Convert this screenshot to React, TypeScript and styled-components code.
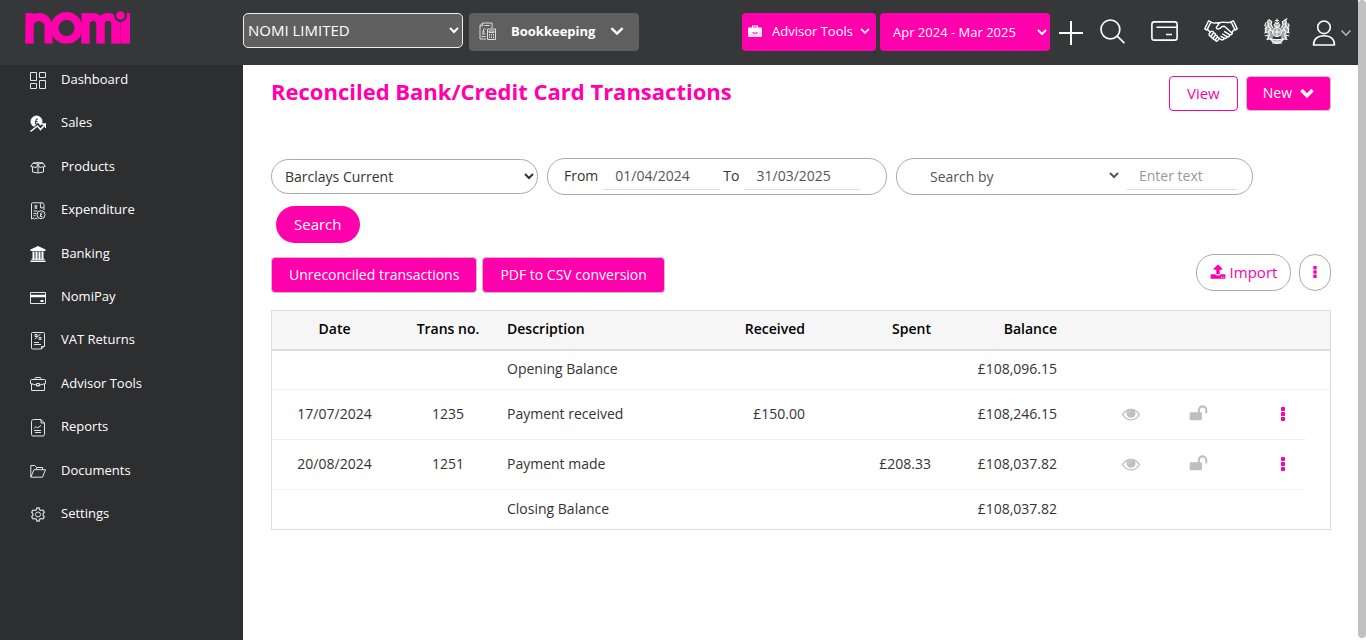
import React from "react";
import styled, { createGlobalStyle } from "styled-components";

const pink = "#ff00ac";

const GlobalStyle = createGlobalStyle`
  *, *::before, *::after { box-sizing: border-box; }
  body {
    margin: 0;
    background: #fff;
    color: #333;
    font: 14px/20px "Open Sans", "Noto Sans", sans-serif;
  }
  button, select, input { font: inherit; margin: 0; }
  button { cursor: pointer; }
`;

const Page = styled.div`
  display: grid;
  grid-template-columns: 243px minmax(0, 1fr) 8px;
  grid-template-rows: 65px 1fr;
  min-height: 100vh;
`;

const Header = styled.header`
  grid-column: 1 / 3;
  display: flex;
  align-items: flex-start;
  padding: 13px 7px 0 0;
  background: #363738;
`;

const ScrollTrack = styled.div`
  grid-column: 3;
  grid-row: 1 / 3;
  margin-bottom: 2px;
  background: #c1c1c1;
  border-radius: 4px;
`;

const LogoLink = styled.a`
  flex: 0 0 243px;
  height: 34px;
  margin-top: -3px;
  padding-left: 25px;
  svg { display: block; }
`;

const CompanySelect = styled.select`
  width: 220px;
  height: 35px;
  padding: 0 0 2px;
  border: 1px solid #eee;
  border-radius: 5px;
  background: #606060;
  color: #fff;
  font-size: 15px;
`;

const ProductButton = styled.button`
  display: flex;
  align-items: center;
  width: 170px;
  height: 38px;
  margin-left: 6px;
  padding: 0 15px 2px 10px;
  border: 0;
  border-radius: 4px;
  background: #5f5f5f;
  color: #fff;
  font-size: 13px;
  font-weight: 700;
  span { flex: 1; padding-left: 15px; text-align: left; }
`;

const HeaderRight = styled.div`
  display: flex;
  align-items: flex-start;
  gap: 4px;
  margin-left: auto;
`;

const AdvisorButton = styled.button`
  display: flex;
  align-items: center;
  justify-content: space-between;
  width: 134px;
  height: 38px;
  padding: 0 6px 2px;
  border: 0;
  border-radius: 4px;
  background: ${pink};
  color: #fff;
  font-size: 13px;
  span { padding-left: 3px; }
`;

const PeriodSelect = styled.select`
  width: 170px;
  height: 38px;
  padding: 0 0 0 9px;
  border: 0;
  border-radius: 4px;
  background: ${pink};
  color: #fff;
  font-size: 13px;
`;

const IconBar = styled.nav`
  display: flex;
  align-items: center;
  gap: 26px;
  height: 36px;
  padding-left: 5px;
`;

const IconLink = styled.a`
  display: flex;
  align-items: center;
  gap: 5px;
  color: #fff;
  svg { display: block; }
`;

const IconPair = styled.div<{ $gap: number }>`
  display: flex;
  align-items: center;
  gap: ${(p) => p.$gap}px;
`;

const Sidebar = styled.aside`
  background: #2d2e30;
`;

const NavList = styled.ul`
  display: flex;
  flex-direction: column;
  justify-content: space-between;
  min-height: 454px;
  margin: 4px 0 0;
  padding: 0 0 0 30px;
  list-style: none;
`;

const NavLink = styled.a`
  display: flex;
  align-items: center;
  gap: 15px;
  height: 20px;
  color: #fff;
  font-size: 13px;
  text-decoration: none;
  svg { flex: none; position: relative; top: 2px; }
`;

const Main = styled.main`
  padding: 11px 27px 40px 28px;
`;

const TitleRow = styled.div`
  display: flex;
  align-items: flex-start;
  justify-content: space-between;
  margin-bottom: 47px;
`;

const Title = styled.h1`
  margin: 0;
  color: ${pink};
  font-size: 22px;
  line-height: 30px;
  font-weight: 700;
`;

const Group = styled.div<{ $gap?: number }>`
  display: flex;
  align-items: center;
  gap: ${(p) => p.$gap ?? 8}px;
`;

const Button = styled.button<{ $outline?: boolean }>`
  display: flex;
  align-items: center;
  gap: 8px;
  height: 36px;
  padding: 0 17px 1px;
  border: 1px solid ${(p) => (p.$outline ? pink : "#d8b8ce")};
  border-radius: 4px;
  background: ${(p) => (p.$outline ? "#fff" : pink)};
  color: ${(p) => (p.$outline ? pink : "#fff")};
`;

const TopButton = styled(Button)`
  height: 35px;
  padding: 0 ${(p) => (p.$outline ? 17 : 16)}px 1px;
  font-size: ${(p) => (p.$outline ? 15 : 14)}px;
`;

const Filters = styled.form`
  display: flex;
  flex-wrap: wrap;
  align-items: center;
  gap: 11px 9px;
  margin-bottom: 11px;
`;

const AccountSelect = styled.select`
  width: 267px;
  height: 35px;
  padding: 0 0 0 9px;
  border: 1px solid #aaa;
  border-radius: 18px;
  background: #fff;
  color: #333;
`;

const Pill = styled.div<{ $width: number }>`
  display: flex;
  align-items: center;
  width: ${(p) => p.$width}px;
  height: 37px;
  padding: 0 15px 2px 16px;
  border: 1px solid #aaa;
  border-radius: 18px;
`;

const Field = styled.input<{ $width: number }>`
  width: ${(p) => p.$width}px;
  height: 29px;
  margin-left: 5px;
  padding: 0 12px;
  border: 0;
  border-bottom: 1px solid #ddd;
  background: transparent;
  color: #555;
  &::placeholder { color: #999; opacity: 1; }
`;

const FieldLabel = styled.label`
  & + input + & { margin-left: 3px; }
`;

const SearchBySelect = styled.select`
  width: 209px;
  height: 29px;
  padding: 2px 0 0 13px;
  border: 0;
  background: transparent;
  color: #555;
`;

const SearchButton = styled.button`
  height: 37px;
  margin-left: 5px;
  padding: 0 18px 2px;
  border: 0;
  border-radius: 19px;
  background: ${pink};
  color: #fff;
  font-size: 15px;
`;

const ActionRow = styled.div`
  display: flex;
  align-items: flex-start;
  justify-content: space-between;
  min-height: 39px;
  margin-bottom: 17px;
  & > :first-child { align-self: flex-end; }
`;

const RoundButton = styled.button<{ $narrow?: boolean }>`
  display: flex;
  align-items: center;
  justify-content: center;
  gap: 4px;
  width: ${(p) => (p.$narrow ? 32 : 95)}px;
  height: 37px;
  padding: 0 0 2px;
  border: 1px solid #aaa;
  border-radius: 18px;
  background: #fff;
  color: ${pink};
  font-size: 15px;
`;

const Table = styled.table`
  width: 100%;
  table-layout: fixed;
  border-collapse: separate;
  border-spacing: 0;
  border: 1px solid #ddd;
`;

const HeadCell = styled.th<{ $align?: string }>`
  height: 40px;
  padding: 0 8px 2px;
  background: #f6f6f6;
  border-bottom: 2px solid #ddd;
  color: #000;
  font-weight: 600;
  text-align: ${(p) => p.$align ?? "left"};
`;

const Row = styled.tr<{ $tall?: boolean }>`
  height: ${(p) => (p.$tall ? 50 : 39)}px;
  td { border-bottom: 1px solid #f0f0f0; }
  &:last-child td { border-bottom: 0; }
`;

const Cell = styled.td<{ $align?: string }>`
  padding: 0 8px 2px;
  text-align: ${(p) => p.$align ?? "left"};
`;

const IconCell = styled.td<{ $right?: number }>`
  padding: 0 ${(p) => p.$right ?? 0}px 4px 0;
  text-align: ${(p) => (p.$right ? "right" : "center")};
`;

const GhostButton = styled.button<{ $pink?: boolean }>`
  padding: 0;
  border: 0;
  background: none;
  color: ${(p) => (p.$pink ? pink : "#c0bfbf")};
  vertical-align: middle;
  svg { display: block; }
`;

const Chevron = ({ size = 10, weight = 2 }: { size?: number; weight?: number }) => (
  <svg width={size} height={size} viewBox="0 0 12 12" fill="none" stroke="currentColor" strokeWidth={weight} aria-hidden="true">
    <path d="M1.2 3.5 6 8.3l4.8-4.8" />
  </svg>
);

const Logo = () => (
  <svg width="106" height="34" viewBox="0 0 106 34" role="img" aria-label="nomi">
    <g fill="none" stroke={pink} strokeWidth="8">
      <rect x="4.5" y="7" width="19" height="60" rx="9.5" />
      <circle cx="41.5" cy="18" r="12" />
      <rect x="60.5" y="7" width="15" height="60" rx="7.5" />
      <rect x="75.5" y="7" width="15" height="60" rx="7.5" />
    </g>
    <g fill={pink}>
      <rect x="0.5" y="3" width="8" height="31" />
      <rect x="56.5" y="3" width="8" height="31" />
      <rect x="97" y="3" width="8" height="31" />
      <rect x="86.5" y="12" width="14" height="22" />
    </g>
    <circle cx="95.5" cy="5.5" r="6.5" fill="#363738" />
    <circle cx="95.5" cy="5.5" r="4.3" fill={pink} />
    <path d="M95.5 12v22" stroke="#363738" strokeWidth="1" opacity=".3" />
    <rect x="0" y="33.6" width="106" height="1" fill="#363738" />
  </svg>
);

const LedgerIcon = () => (
  <svg width="17" height="18" viewBox="0 0 17 18" fill="none" stroke="#ddd" aria-hidden="true">
    <path d="M7 17H1V3.5L3.5 1H13v5M1 3.8h2.7V1M5.5 3.5h5M6.5 7.2C5 6 4 7 4.4 9.5L3.5 12h3M3.3 9.8h2.4M2.5 14.5h4" />
    <path d="M8.5 7h8v10.5h-8zM10 9h5v1.5h-5zM10 12.5h1m1 0h1m1 0h1M10 14h1m1 0h1m1 0h1M10 15.6h1m1 0h1m1 0h1" />
  </svg>
);

const BriefcaseSolid = () => (
  <svg width="14" height="12" viewBox="0 0 14 12" aria-hidden="true">
    <path fill="none" stroke="#fff" strokeWidth="1.2" d="M4.6 3V1h4.8v2" />
    <path fill="#fff" d="M1 2.4h12q1 0 1 1V7H0V3.4q0-1 1-1z" />
    <path fill="#ffe0f4" d="M0 6.6h14V11q0 1-1 1H1q-1 0-1-1z" />
    <path fill="none" stroke={pink} strokeWidth=".9" d="M5.2 7v1.2h3.6V7" />
  </svg>
);

const PlusIcon = () => (
  <svg width="24" height="28" viewBox="0 -4 24 28" stroke="currentColor" strokeWidth="2" aria-hidden="true">
    <path d="M12 0v24M0 12h24" />
  </svg>
);

const SearchIcon = () => (
  <svg width="25" height="25" viewBox="0 0 25 25" fill="none" stroke="currentColor" strokeWidth="1.7" aria-hidden="true">
    <circle cx="10.4" cy="10.4" r="9.4" />
    <path d="m17.2 17.2 7.2 7" />
  </svg>
);

const CardIcon = () => (
  <svg width="27" height="20" viewBox="0 0 27 20" fill="none" stroke="currentColor" strokeWidth="1.6" aria-hidden="true">
    <rect x=".9" y=".9" width="25.2" height="18.2" rx="2.4" />
    <path d="M5.5 6.2H26M15 13.5h6" />
  </svg>
);

const HandshakeIcon = () => (
  <svg width="34" height="22" viewBox="0 0 34 22" fill="none" stroke="currentColor" strokeWidth="1.4" strokeLinejoin="round" strokeLinecap="round" aria-hidden="true">
    <path d="M4.6.8.8 8.9l2.1 1.2L7 1.8zM29.4.8l3.8 8.1-2.1 1.2L27 1.8z" />
    <path d="M7 2.4c3 1 5 .6 8.2.2M27 2.2c-4.500.8-8.500-.6-11.200.4l-3.600 5c.7 2.200 4 1.600 5.600-1l2.600-.4 8 7.200" />
    <path d="m3.600 9.600 2.600 2.600M30.400 9.600l-2.300 2.400" />
    <path d="M28 12.600c.5 1.400-1 2.600-2.400 1.900.4 1.500-1.100 2.700-2.700 2 .2 1.600-1.400 2.400-2.800 1.600-.3 1.800-2 2.200-3.500 1.200l-1.200-.8" />
    <path d="m20.600 11.600 4.800 3M18.600 14l4.200 2.600M17 16.400l3 1.800" />
    <path d="m5.300 13.600 2-2.300c1.400-.6 2.500.5 2 1.800 1.500-.4 2.500.7 2 2.100 1.400-.4 2.400.8 1.900 2 1.500-.1 2.200 1 1.500 2.200l-1.300 1.500c-1 .7-2.200-.1-2-1.400-1.300.7-2.500-.3-2.200-1.600-1.400.4-2.500-.6-2-1.900-1.400.3-2.600-1-1.900-2.400zM7.200 16l2.100-2.700M9.300 17.800l2-2.500M11.500 19.300l1.700-2" />
  </svg>
);

const CrestIcon = () => (
  <svg width="26" height="26" viewBox="0 0 26 26" fill="none" stroke="currentColor" strokeLinecap="round" aria-hidden="true">
    <g fill="currentColor" stroke="none" opacity=".55">
      <path d="M4 2.500 8 4l-.5 3L9 10l-1.500 4 2 5-3 2.500-3.500-1 .5-5L1.500 12 2 8z" />
      <path d="M22 2.500 18 4l.5 3L17 10l1.500 4-2 5 3 2.500 3.500-1-.5-5 2-3.500-.5-4z" />
      <path d="M10 6h6v3h-6zM5.500 21h15l-3 4h-9z" />
      <circle cx="13" cy="14" r="5" />
    </g>
    <circle cx="13" cy="14" r="4.500" strokeWidth="1.200" />
    <path d="M13 10.500v7M10 14h6" strokeWidth="1" />
    <path d="M10.300 7.800c-1-1.800.5-2.600 2.700-2.300 2.200-.3 3.700.5 2.700 2.300zM13 5.500V1M11.600 2.600h2.800M11 4.200l1 .9M15 4.200l-1 .9" strokeWidth="1" />
    <path d="M5.200 1.800c-2 .6-2 2.800-.4 3.800L4 8l2.600 2.600-2 3 .8 3.500-1.600 3.600M5.200 1.800l2.600 2-1 2.700 2 3M3 9.500l-2 1.200M2.800 14l-2 1M3.500 17.500l-2.300.3M2 4.600.8 7.500l1.500 2-1 3.500 1.400 1.500M6 12l2 1" strokeWidth="1.100" />
    <path d="M20.600 2.300 23 .8M20.800 2.300c2 .5 2 2.400.5 3.500l.8 2.400-2.600 2.400 2 3-.8 3.500 1.600 3.600M20.800 2.300l-2.600 1.600 1 2.600-2 3M23 9.500l2 1.200M23.200 14l2 1M22.500 17.500l2.300.3M24 5.600l1.200 2-1.500 2 1 3.500-1.400 1.500M20 12l-2 1" strokeWidth="1.100" />
    <path d="M3 21.500c3-1.400 4.300.2 5.500 1.400 2.700 1.500 6.300 1.500 9 0 1.200-1.200 2.500-2.800 5.500-1.400M7 20.500c3 1.800 9 1.800 12 0M8.500 25c3 .6 6 .6 9 0" strokeWidth="1.100" />
  </svg>
);

const UserIcon = () => (
  <svg width="24" height="30" viewBox="0 -4 24 30" fill="none" stroke="currentColor" strokeWidth="1.600" strokeLinejoin="round" aria-hidden="true">
    <circle cx="12" cy="7.300" r="6.300" />
    <path d="M1.500 25c0-5.700 4-9.300 10.500-9.300S22.500 19.300 22.500 25z" />
  </svg>
);

const AccountChevron = () => (
  <svg width="10" height="12" viewBox="0 0 10 12" fill="none" stroke="#bbb" strokeWidth="1.500" aria-hidden="true">
    <path d="M.6 5.500 5 10.200l4.400-4.700" />
  </svg>
);

const UploadIcon = () => (
  <svg width="16" height="16" viewBox="0 0 1792 1792" fill="currentColor" aria-hidden="true">
    <path d="M1344 1472q0-26-19-45t-45-19-45 19-19 45 19 45 45 19 45-19 19-45zm256 0q0-26-19-45t-45-19-45 19-19 45 19 45 45 19 45-19 19-45zm128-224v320q0 40-28 68t-68 28h-1472q-40 0-68-28t-28-68v-320q0-40 28-68t68-28h427q21 56 70.500 92t110.500 36h256q61 0 110.500-36t70.500-92h427q40 0 68 28t28 68zm-325-648q-17 40-59 40h-256v448q0 26-19 45t-45 19h-256q-26 0-45-19t-19-45v-448h-256q-42 0-59-40-17-39 14-69l448-448q18-19 45-19t45 19l448 448q31 30 14 69z" />
  </svg>
);

const DotsIcon = ({ height = 14 }: { height?: number }) => (
  <svg width="4" height={height} viewBox="0 0 4 14" fill="currentColor" aria-hidden="true">
    <rect width="4" height="4" rx=".8" />
    <rect y="5" width="4" height="4" rx=".8" />
    <rect y="10" width="4" height="4" rx=".8" />
  </svg>
);

const EyeIcon = () => (
  <svg width="18" height="18" viewBox="0 0 1792 1792" fill="currentColor" aria-hidden="true">
    <path d="M1664 960q-152-236-381-353 61 104 61 225 0 185-131.500 316.500t-316.500 131.500-316.500-131.500-131.500-316.500q0-121 61-225-229 117-381 353 133 205 333.500 326.500t434.500 121.500 434.500-121.500 333.500-326.500zm-720-384q0-20-14-34t-34-14q-125 0-214.500 89.500t-89.500 214.500q0 20 14 34t34 14 34-14 14-34q0-86 61-147t147-61q20 0 34-14t14-34zm848 384q0 34-20 69-140 230-376.500 368.500t-499.500 138.500-499.500-139-376.500-368q-20-35-20-69t20-69q140-229 376.500-368t499.500-139 499.500 139 376.500 368q20 35 20 69z" />
    <circle cx="896" cy="860" r="330" opacity=".75" />
  </svg>
);

const UnlockIcon = () => (
  <svg width="19" height="19" viewBox="0 0 1792 1792" fill="currentColor" aria-hidden="true">
    <path d="M1728 576v256q0 26-19 45t-45 19h-64q-26 0-45-19t-19-45v-256q0-106-75-181t-181-75-181 75-75 181v192h96q40 0 68 28t28 68v576q0 40-28 68t-68 28h-960q-40 0-68-28t-28-68v-576q0-40 28-68t68-28h672v-192q0-185 131.500-316.500t316.500-131.500 316.500 131.500 131.500 316.500z" />
  </svg>
);

const NavIcon = ({ children }: { children: React.ReactNode }) => (
  <svg width="16" height="18" viewBox="0 0 16 18" fill="none" stroke="#e4e4e4" aria-hidden="true">
    {children}
  </svg>
);

const navItems: { label: string; icon: React.ReactNode }[] = [
  { label: "Dashboard", icon: <path d="M.5.500h6v8h-6zM9.500.500h6v5h-6zM.500 11.500h6v5h-6zM9.500 8.500h6v8h-6z" /> },
  {
    label: "Sales",
    icon: (
      <>
        <circle cx="6.500" cy="6.500" r="5.500" fill="#fff" stroke="#fff" />
        <path stroke="#2d2e30" d="M8 4.300C6.500 3.300 5.600 4.300 6 6.500L5.300 9H8M5 6.600h2.500" />
        <path stroke="#2d2e30" strokeWidth="3.500" d="m4 14 4-3.500 2.500 3L14 9" />
        <path stroke="#fff" strokeWidth="1.500" d="m.5 16.500 7-5.500 3 3.500 4-4.500M11.500 9h4v4" />
      </>
    ),
  },
  { label: "Products", icon: <path d="M2.500 8v5l5.500 1 5.500-1V8M8 5.500V14M8 5 3 4 .7 7.500l5.600 1L8 5l1.700 3.500 5.600-1L13 4zM3 4l5-.5 5 .5" /> },
  {
    label: "Expenditure",
    icon: (
      <>
        <path d="M12 .8H2.500q-1 0-1 1V17l1.500-1 1.500 1L6 16l1.500 1M11.500.8q-1 .2-1 1.500v3.500H14V2.500Q14 .8 12 .8M14 6v2M6 3v4M4.300 4h3M4.300 6h3M3.500 9h4M3.500 11.500h3M3.500 13.700h2" />
        <circle cx="11" cy="12.700" r="4" />
        <path d="M12.300 11c-1.300-.6-2 .2-1.600 1.500l-.4 2h2M10 12.700h2" />
      </>
    ),
  },
  {
    label: "Banking",
    icon: (
      <>
        <path fill="#fff" stroke="none" d="M8 0 15.500 3.500V5H.5V3.500zM.5 14.500h15V16H.5zM1.500 12.700h13v1h-13z" />
        <path stroke="#fff" strokeWidth="2" d="M3.500 5.500v8M6.500 5.500v8M9.500 5.500v8M12.500 5.500v8" />
      </>
    ),
  },
  {
    label: "NomiPay",
    icon: (
      <>
        <path d="M.5 3.500h15v11H.5z" />
        <path stroke="#fff" strokeWidth="2.500" d="M0 7h16" />
        <path stroke="#fff" strokeWidth="2" d="M10.500 12h3" />
      </>
    ),
  },
  { label: "VAT Returns", icon: <path d="M2.500.5h11q1 0 1 1V14l-3 3h-9q-1 0-1-1V1.500q0-1 1-1zM11.500 17v-2.500h3M5 7l5.500-5M5 2.500h2v2H5zM9 5.500h2v2H9zM4 10.500h5M4 12.500h7" /> },
  { label: "Advisor Tools", icon: <path d="M5 3.500V2.500q0-1 1-1h4q1 0 1 1v1M1.500 3.500h13q1 0 1 1v3L8 9.500.5 7.500v-3q0-1 1-1zM1.500 8v6.500h13V8M6.500 7.500h3V10h-3z" /> },
  { label: "Reports", icon: <path d="M3.500.500H11l3.500 3.500v11.500q0 1.500-1.500 1.500H3q-1.500 0-1.500-1.500v-13q0-2 2-2zM11 .500V4h3.500M4 9.500l2-2L7.500 9 11 6.500M4 11.500h7M5 13.500h6" /> },
  { label: "Documents", icon: <path strokeLinejoin="round" d="M.8 14V2.500h4l1.700 2h6v2.200M.8 14.200 4 6.700h11.500l-3 7.500zM6 6.500 7 5" /> },
  {
    label: "Settings",
    icon: (
      <>
        <circle cx="8" cy="8.500" r="2.500" />
        <path strokeWidth="1.200" strokeLinejoin="round" d="M7 1.800h2l.6 1.900 1.400.8 2-.5 1.400 2.200-1.300 1.500v1.600l1.300 1.500-1.400 2.200-2-.5-1.400.8-.6 1.900H7l-.6-1.900-1.400-.8-2 .5-1.400-2.200 1.300-1.500V7.700L1.600 6.200 3 4l2 .5 1.400-.8z" />
      </>
    ),
  },
];

type Entry = { date?: string; no?: string; text: string; received?: string; spent?: string; balance: string };

const entries: Entry[] = [
  { text: "Opening Balance", balance: "£108,096.15" },
  { date: "17/07/2024", no: "1235", text: "Payment received", received: "£150.00", balance: "£108,246.15" },
  { date: "20/08/2024", no: "1251", text: "Payment made", spent: "£208.33", balance: "£108,037.82" },
  { text: "Closing Balance", balance: "£108,037.82" },
];

const TransactionsTable = () => (
  <Table>
    <colgroup>
      <col width="125" />
      <col width="102" />
      <col />
      <col width="122" />
      <col width="126" />
      <col width="126" />
      <col width="100" />
      <col width="66" />
      <col width="74" />
      <col width="25" />
    </colgroup>
    <thead>
      <tr>
        <HeadCell $align="center">Date</HeadCell>
        <HeadCell $align="center">Trans no.</HeadCell>
        <HeadCell>Description</HeadCell>
        <HeadCell $align="right">Received</HeadCell>
        <HeadCell $align="right">Spent</HeadCell>
        <HeadCell $align="right">Balance</HeadCell>
        <HeadCell colSpan={4} />
      </tr>
    </thead>
    <tbody>
      {entries.map((e) => (
        <Row key={e.text} $tall={!!e.date}>
          <Cell $align="center">{e.date}</Cell>
          <Cell $align="center">{e.no}</Cell>
          <Cell>{e.text}</Cell>
          <Cell $align="right">{e.received}</Cell>
          <Cell $align="right">{e.spent}</Cell>
          <Cell $align="right">{e.balance}</Cell>
          {e.date ? (
            <>
              <IconCell $right={25}>
                <GhostButton aria-label="View transaction"><EyeIcon /></GhostButton>
              </IconCell>
              <IconCell>
                <GhostButton aria-label="Unlock transaction"><UnlockIcon /></GhostButton>
              </IconCell>
              <IconCell $right={20}>
                <GhostButton $pink aria-label="More actions"><DotsIcon /></GhostButton>
              </IconCell>
            </>
          ) : (
            <Cell colSpan={4} />
          )}
        </Row>
      ))}
    </tbody>
  </Table>
);

export default function App() {
  return (
    <Page>
      <GlobalStyle />
      <Header>
        <LogoLink href="#"><Logo /></LogoLink>
        <CompanySelect aria-label="Company" defaultValue="nomi">
          <option value="nomi">NOMI LIMITED</option>
        </CompanySelect>
        <ProductButton>
          <LedgerIcon />
          <span>Bookkeeping</span>
          <Chevron size={14} weight={2} />
        </ProductButton>
        <HeaderRight>
          <AdvisorButton>
            <BriefcaseSolid />
            <span>Advisor Tools</span>
            <Chevron size={10} weight={2} />
          </AdvisorButton>
          <PeriodSelect aria-label="Accounting period" defaultValue="2025">
            <option value="2025">Apr 2024 - Mar 2025</option>
          </PeriodSelect>
          <IconBar aria-label="Quick links">
            <IconPair $gap={17}>
              <IconLink href="#" aria-label="Add"><PlusIcon /></IconLink>
              <IconLink href="#" aria-label="Search"><SearchIcon /></IconLink>
            </IconPair>
            <IconLink href="#" aria-label="Payments"><CardIcon /></IconLink>
            <IconLink href="#" aria-label="Partners"><HandshakeIcon /></IconLink>
            <IconPair $gap={22}>
              <IconLink href="#" aria-label="HMRC"><CrestIcon /></IconLink>
              <IconLink href="#" aria-label="Account"><UserIcon /><AccountChevron /></IconLink>
            </IconPair>
          </IconBar>
        </HeaderRight>
      </Header>
      <ScrollTrack />
      <Sidebar>
        <nav aria-label="Main">
          <NavList>
            {navItems.map((item) => (
              <li key={item.label}>
                <NavLink href="#">
                  <NavIcon>{item.icon}</NavIcon>
                  {item.label}
                </NavLink>
              </li>
            ))}
          </NavList>
        </nav>
      </Sidebar>
      <Main>
        <TitleRow>
          <Title>Reconciled Bank/Credit Card Transactions</Title>
          <Group>
            <TopButton $outline>View</TopButton>
            <TopButton>New <Chevron size={14} weight={3} /></TopButton>
          </Group>
        </TitleRow>
        <Filters onSubmit={(e) => e.preventDefault()}>
          <AccountSelect aria-label="Bank account" defaultValue="barclays">
            <option value="barclays">Barclays Current</option>
          </AccountSelect>
          <Pill $width={340}>
            <FieldLabel htmlFor="from">From</FieldLabel>
            <Field id="from" $width={117} defaultValue="01/04/2024" />
            <FieldLabel htmlFor="to">To</FieldLabel>
            <Field id="to" $width={116} defaultValue="31/03/2025" />
          </Pill>
          <Pill $width={357}>
            <SearchBySelect aria-label="Search by" defaultValue="">
              <option value="">Search by</option>
            </SearchBySelect>
            <Field $width={110} aria-label="Search text" placeholder="Enter text" />
          </Pill>
          <SearchButton type="submit">Search</SearchButton>
        </Filters>
        <ActionRow>
          <Group $gap={5}>
            <Button>Unreconciled transactions</Button>
            <Button>PDF to CSV conversion</Button>
          </Group>
          <Group>
            <RoundButton><UploadIcon /> Import</RoundButton>
            <RoundButton $narrow aria-label="More"><DotsIcon height={12} /></RoundButton>
          </Group>
        </ActionRow>
        <TransactionsTable />
      </Main>
    </Page>
  );
}
